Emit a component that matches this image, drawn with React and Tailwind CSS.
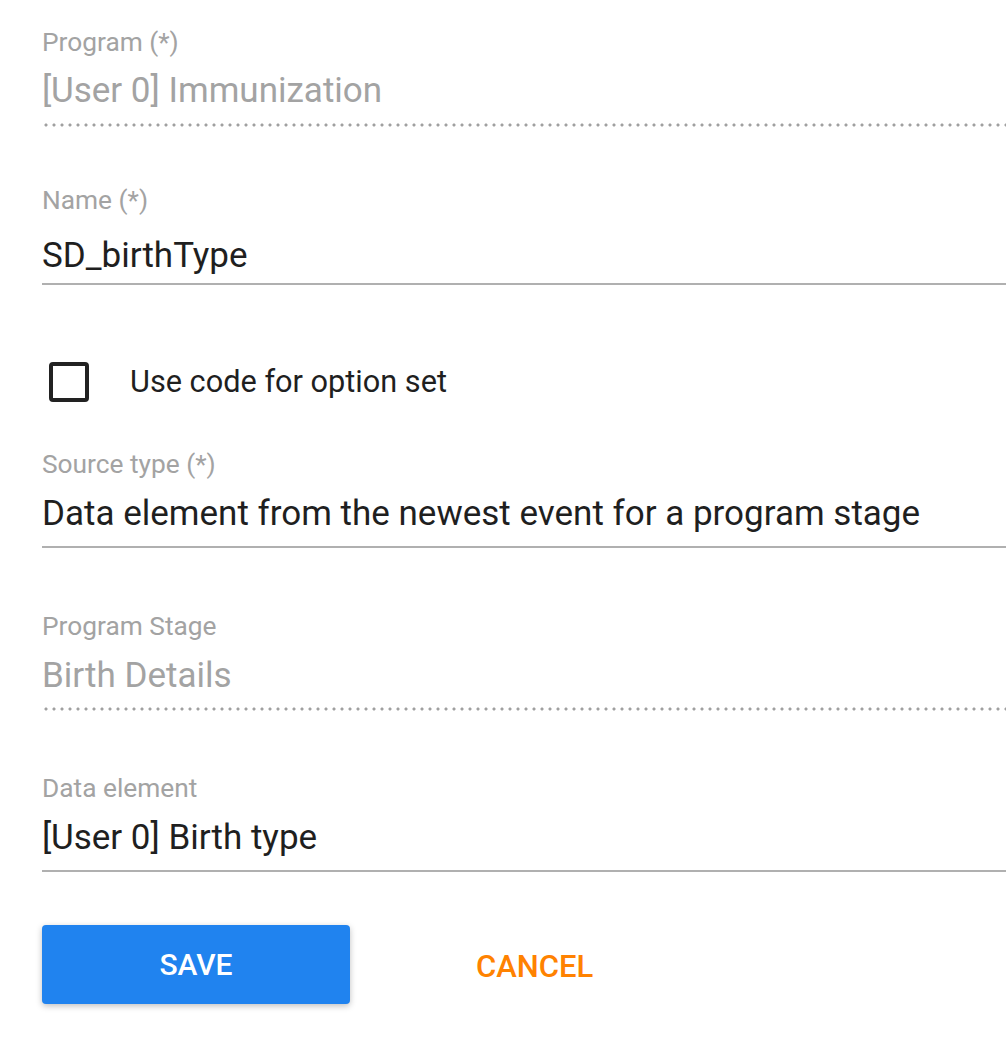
import React from 'react';

const font = { fontFamily: 'Roboto, "Noto Sans", Arial, sans-serif' };

function Line({ dotted }) {
  if (dotted) {
    return (
      <div className="h-[4px] w-full bg-[radial-gradient(circle,_#a0a0a0_1.3px,_transparent_1.8px)] bg-[length:8px_4px] bg-repeat-x" />
    );
  }
  return <div className="h-[2px] w-full bg-[#b0b0b0]" />;
}

function Field({ label, value, disabled, dotted, top, gap, lineGap }) {
  return (
    <div className={top}>
      <div className="h-[30px] text-[26.3px] leading-[30px] text-[#a3a3a3]">{label}</div>
      <div
        className={`${gap} h-[40px] text-[35px] leading-[40px] whitespace-nowrap ${
          disabled ? 'text-[#a3a3a3]' : 'text-[#1f1f1f]'
        }`}
      >
        {value}
      </div>
      <div className={lineGap}>
        <Line dotted={dotted} />
      </div>
    </div>
  );
}

export default function App() {
  return (
    <div className="min-h-screen w-full bg-white pl-[42px]" style={font}>
      <div className="flex flex-col">
        <Field
          top="mt-[27px]"
          gap="mt-[14px]"
          lineGap="mt-[12px]"
          label="Program (*)"
          value="[User 0] Immunization"
          disabled
          dotted
        />
        <Field
          top="mt-[58px]"
          gap="mt-[21px]"
          lineGap="mt-[7px]"
          label="Name (*)"
          value="SD_birthType"
        />

        <label className="mt-[77px] flex items-center">
          <span className="ml-[7px] h-[40px] w-[40px] rounded-[4px] border-[4px] border-[#222]" />
          <span className="ml-[41px] text-[30.7px] leading-[40px] text-[#1f1f1f]">Use code for option set</span>
        </label>

        <Field
          top="mt-[47px]"
          gap="mt-[15px]"
          lineGap="mt-[12px]"
          label="Source type (*)"
          value="Data element from the newest event for a program stage"
        />
        <Field
          top="mt-[63px]"
          gap="mt-[15px]"
          lineGap="mt-[11px]"
          label="Program Stage"
          value="Birth Details"
          disabled
          dotted
        />
        <Field
          top="mt-[62px]"
          gap="mt-[15px]"
          lineGap="mt-[12px]"
          label="Data element"
          value="[User 0] Birth type"
        />

        <div className="mt-[53px] flex items-center">
          <button className="h-[79px] w-[308px] rounded-[4px] bg-[#2083ef] text-[30px] font-medium text-white shadow-[0_2px_6px_rgba(0,0,0,0.25)]">
            SAVE
          </button>
          <button className="ml-[126px] mt-[6px] text-[31px] font-medium text-[#ff8200]">CANCEL</button>
        </div>
      </div>
    </div>
  );
}
